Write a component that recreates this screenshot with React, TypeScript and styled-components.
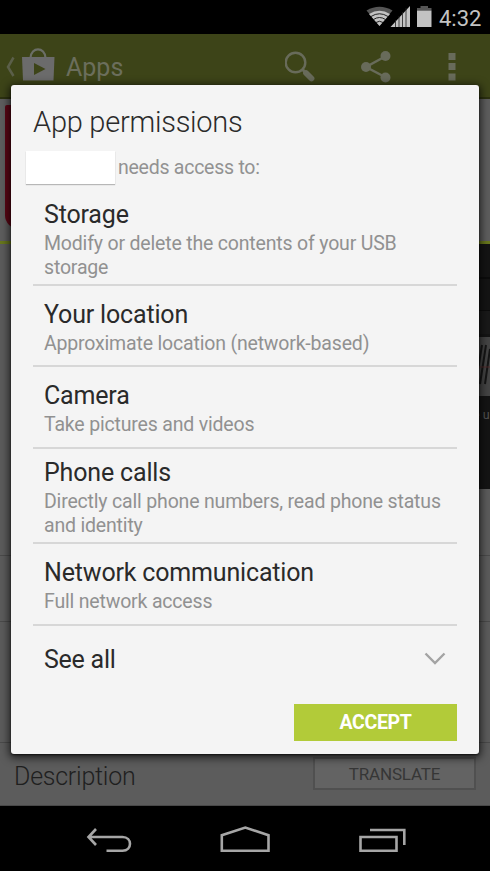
import React from "react";
import styled, { createGlobalStyle } from "styled-components";

const GlobalStyle = createGlobalStyle`
  * { box-sizing: border-box; }
  body { margin: 0; background: #000; font-family: Roboto, "Liberation Sans", sans-serif; }
  svg { display: block; flex: none; }
`;

const Screen = styled.div`
  position: relative;
  width: 490px;
  height: 871px;
  display: flex;
  flex-direction: column;
  overflow: hidden;
  background: #000;
`;

const StatusBar = styled.header`
  height: 34px;
  flex: none;
  display: flex;
  justify-content: flex-end;
  padding: 0 8px 0 0;
  color: #c3c3c3;
`;

const Clock = styled.span`
  width: 43px;
  margin-left: 7px;
  font-size: 22px;
  line-height: 37px;
  white-space: nowrap;
`;

const Store = styled.main`
  height: 772px;
  flex: none;
  display: flex;
  flex-direction: column;
  background: #5c5c5c;
  border-bottom: 1px solid #484848;
`;

const ActionBar = styled.div`
  height: 65px;
  flex: none;
  display: flex;
  align-items: flex-start;
  background: #3d4418;
  border-bottom: 2px solid #2c3110;
`;

const ActionTitle = styled.span`
  flex: 1;
  margin-left: 11px;
  padding-top: 17px;
  font-size: 25px;
  line-height: 34px;
  color: #6b6e5c;
`;

const Hero = styled.div`
  height: 145px;
  flex: none;
  padding: 6px 0 0 5px;
  background: #5e5e5e;
  border-bottom: 3px solid #68771c;
`;

const AppIcon = styled.div`
  width: 120px;
  height: 124px;
  border-radius: 2px 2px 14px 14px;
  background: #5b0614;
`;

const Preview = styled.div`
  height: 245px;
  flex: none;
  display: flex;
  justify-content: flex-end;
`;

const InfoRow = styled.div<{ $height: number }>`
  height: ${(p) => p.$height}px;
  flex: none;
  border-bottom: 1px solid #4a4a4a;
`;

const DescriptionRow = styled.div`
  flex: 1;
  display: flex;
  justify-content: space-between;
  align-items: flex-start;
  padding: 14px 14px 0 14px;
`;

const DescriptionTitle = styled.span`
  padding-top: 2px;
  font-size: 25px;
  line-height: 36px;
  font-weight: 300;
  color: #1f1f1f;
  letter-spacing: -0.25px;
`;

const TranslateButton = styled.button`
  width: 163px;
  height: 33px;
  padding: 0;
  border: 2px solid #505050;
  background: #636363;
  color: #363636;
  font: 17px/28px Roboto, sans-serif;
  letter-spacing: -0.15px;
`;

const Dialog = styled.section`
  position: absolute;
  left: 11px;
  top: 85px;
  width: 468px;
  height: 669px;
  padding: 17px 22px 0 15px;
  display: flex;
  flex-direction: column;
  border-radius: 3px;
  background: #f4f4f4;
  box-shadow: 0 2px 8px 2px rgba(0, 0, 0, 0.65), 0 1px 2px rgba(0, 0, 0, 0.6);
`;

const DialogTitle = styled.h1`
  margin: 0 0 0 7px;
  font-size: 29px;
  line-height: 40px;
  font-weight: 300;
  letter-spacing: -0.25px;
  color: #2b2b2b;
`;

const AccessLine = styled.div`
  display: flex;
  height: 35px;
  margin-top: 9px;
  font-size: 19.5px;
  line-height: 34px;
  letter-spacing: -0.25px;
  color: #929292;
  white-space: nowrap;
`;

const NameBox = styled.span`
  width: 89px;
  height: 33px;
  margin-right: 3px;
  background: #fff;
  box-shadow: 0 1px 1px rgba(0, 0, 0, 0.25);
`;

const PermissionList = styled.div`
  margin-left: 7px;
`;

const Permission = styled.div<{ $height: number; $top: number }>`
  height: ${(p) => p.$height}px;
  padding: ${(p) => p.$top}px 0 0 11px;
  border-bottom: 2px solid #d7d7d7;
`;

const PermissionTitle = styled.h2`
  margin: 0 0 2px;
  font-size: 25px;
  line-height: 30px;
  font-weight: 400;
  letter-spacing: -0.17px;
  color: #2a2a2a;
`;

const PermissionText = styled.p`
  margin: 0;
  font-size: 19.5px;
  line-height: 23.5px;
  letter-spacing: -0.18px;
  color: #919191;
  white-space: pre-line;
`;

const SeeAll = styled.div`
  display: flex;
  justify-content: space-between;
  align-items: center;
  height: 78px;
  padding: 0 11px 12px 18px;
  font-size: 25px;
  letter-spacing: -0.25px;
  color: #2a2a2a;
`;

const AcceptButton = styled.button`
  align-self: flex-end;
  width: 163px;
  height: 37px;
  padding: 0;
  border: 0;
  background: #b2cb39;
  color: #fff;
  font: 700 19.5px/38px Roboto, sans-serif;
  letter-spacing: -0.35px;
`;

const NavBar = styled.nav`
  flex: 1;
  display: flex;
  background: #000;
`;

const permissions = [
  { title: "Storage", text: "Modify or delete the contents of your USB\nstorage", height: 100, top: 14 },
  { title: "Your location", text: "Approximate location (network-based)", height: 81, top: 13.5 },
  { title: "Camera", text: "Take pictures and videos", height: 82, top: 14 },
  { title: "Phone calls", text: "Directly call phone numbers, read phone status\nand identity", height: 95, top: 9 },
  { title: "Network communication", text: "Full network access", height: 82, top: 14 },
];

const StatusIcons = () => (
  <svg width="66" height="34" viewBox="366 0 66 34">
    <path d="M366.500 10.500Q379.500 3 392.500 10.500L379.500 26Z" fill="#555" />
    <path d="M369 14Q379.500 7.500 390 14L379.500 26Z" fill="#c3c3c3" />
    <g fill="none" stroke="#111" strokeWidth="0.9">
      <path d="M371 16.500Q379.500 11 388 16.500" />
      <path d="M373.500 19.500Q379.500 15.500 385.500 19.500" />
      <path d="M376 22.500Q379.500 20 383 22.500" />
    </g>
    <path d="M390.500 27L410 6V27Z" fill="#c3c3c3" />
    <path d="M395.500 20V27M399 16V27M402.500 12V27M406 8V27" stroke="#222" strokeWidth="0.8" />
    <path d="M420.500 6H428V8H431.500V10.500H417V8H420.500Z" fill="#555" />
    <path d="M417 10.500H431.500V27H417Z" fill="#c3c3c3" />
  </svg>
);

const StoreLogo = () => (
  <svg width="55" height="63" viewBox="0 34 55 63">
    <path d="M13.500 57.500L8 67L13.500 76" fill="none" stroke="#5b5f49" strokeWidth="2.500" />
    <path d="M30.500 58C31 46.500 45 46.500 45.500 58" fill="none" stroke="#6b6e66" strokeWidth="2.200" />
    <path d="M22 57H54.500L53.500 80.500H23Z" fill="#6b6b6b" />
    <path d="M34 63V75L45.500 69Z" fill="#3d4418" />
  </svg>
);

const ActionIcons = () => (
  <svg width="205" height="63" viewBox="285 34 205 63" fill="#686b5a">
    <circle cx="295.500" cy="62.500" r="9.800" fill="none" stroke="#686b5a" strokeWidth="2.400" />
    <path d="M302 69L306 73" stroke="#686b5a" strokeWidth="3" />
    <path d="M306 73L311.500 78.500" stroke="#686b5a" strokeWidth="5.800" strokeLinecap="round" />
    <path d="M386 56L366 67L386 77.500" fill="none" stroke="#686b5a" strokeWidth="2.500" />
    <circle cx="385.500" cy="56" r="5" />
    <circle cx="366" cy="67" r="5" />
    <circle cx="385.500" cy="77.500" r="5" />
    <path d="M448.500 53H455.500V60H448.500ZM448.500 63H455.500V70H448.500ZM448.500 73.500H455.500V80.500H448.500Z" />
  </svg>
);

const PreviewShot = () => (
  <svg width="60" height="245" viewBox="430 244 60 245">
    <path d="M430 244H490V489H430Z" fill="#141414" />
    <path d="M430 278H490M430 311H490" stroke="#0a0a0a" strokeWidth="1.500" />
    <path d="M430 311H490V334H430Z" fill="#191919" />
    <path d="M430 337H490V396H430Z" fill="#444" />
    <path d="M486 345L480 384M482 345L478 370M490 349L485 384" stroke="#161616" strokeWidth="2" />
    <path d="M430 367H490" stroke="#5b2828" strokeWidth="0.800" />
    <text x="473" y="419" fontSize="12.500" fill="#555" fontFamily="Roboto">e u</text>
  </svg>
);

const NavIcons = () => (
  <svg width="490" height="65" viewBox="0 806 490 65" fill="none" stroke="#a6a6a6" strokeWidth="2.600">
    <path d="M96 829L88.500 837L96 845M89 837H122.500C132.500 837 132.500 850.700 122.500 850.700H106.500" />
    <path d="M221.800 850.700V835.300L245.300 827.500L268.500 835.300V850.700Z" />
    <path d="M360.500 837H396.500V850.700H360.500ZM370 830H404.300V845" />
  </svg>
);

export default function App() {
  return (
    <>
      <GlobalStyle />
      <Screen>
        <StatusBar>
          <StatusIcons />
          <Clock>4:32</Clock>
        </StatusBar>
        <Store>
          <ActionBar>
            <StoreLogo />
            <ActionTitle>Apps</ActionTitle>
            <ActionIcons />
          </ActionBar>
          <Hero>
            <AppIcon />
          </Hero>
          <Preview>
            <PreviewShot />
          </Preview>
          <InfoRow $height={67} />
          <InfoRow $height={66} />
          <InfoRow $height={121} />
          <DescriptionRow>
            <DescriptionTitle>Description</DescriptionTitle>
            <TranslateButton>TRANSLATE</TranslateButton>
          </DescriptionRow>
        </Store>
        <NavBar>
          <NavIcons />
        </NavBar>
        <Dialog>
          <DialogTitle>App permissions</DialogTitle>
          <AccessLine>
            <NameBox />
            needs access to:
          </AccessLine>
          <PermissionList>
            {permissions.map((p) => (
              <Permission key={p.title} $height={p.height} $top={p.top}>
                <PermissionTitle>{p.title}</PermissionTitle>
                <PermissionText>{p.text}</PermissionText>
              </Permission>
            ))}
          </PermissionList>
          <SeeAll>
            See all
            <svg width="22" height="14" viewBox="0 0 22 14" fill="none" stroke="#a3a3a3" strokeWidth="2.400">
              <path d="M1.500 1.500L11 11L20.500 1.500" />
            </svg>
          </SeeAll>
          <AcceptButton>ACCEPT</AcceptButton>
        </Dialog>
      </Screen>
    </>
  );
}
